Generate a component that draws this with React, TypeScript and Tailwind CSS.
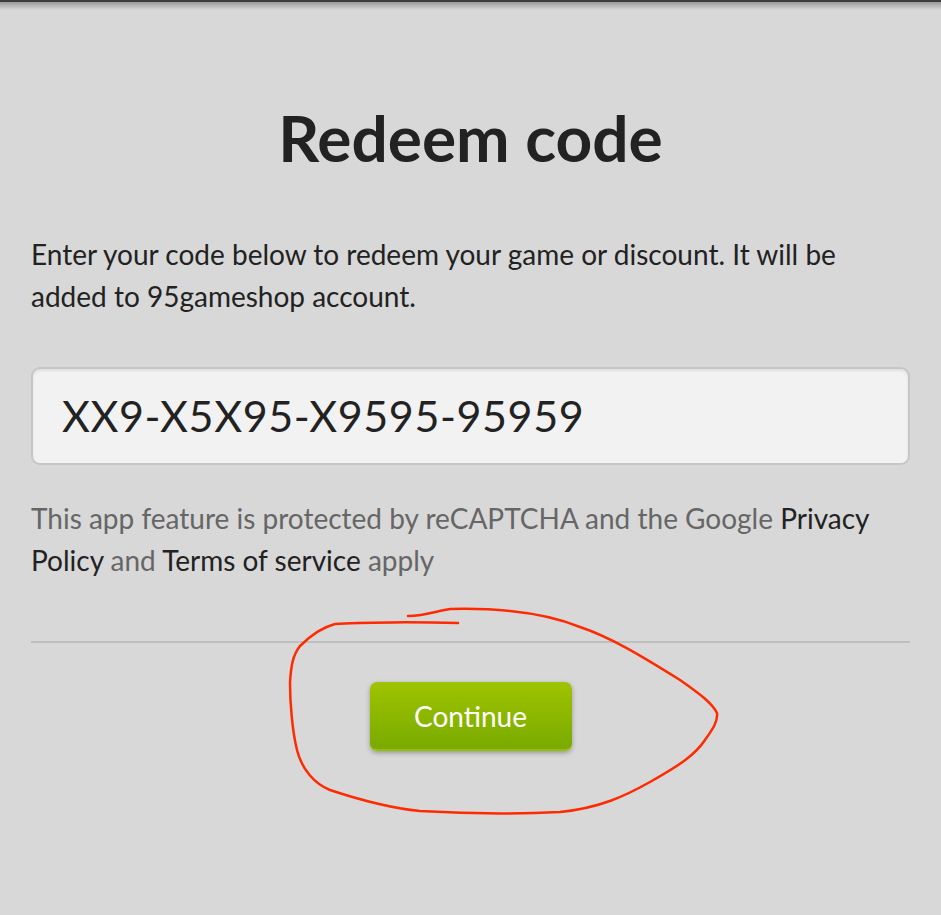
import React from 'react';

// hand-drawn red marker loop around the button
function MarkerLoop() {
  return (
    <svg
      className="pointer-events-none absolute left-0 top-0"
      width="941"
      height="915"
      viewBox="0 0 941 915"
      fill="none"
    >
      <path
        d="M408 616 C425 616 437 611 450 609 C490 608 540 611 580 627 C610 637 640 655 680 680 C700 694 712 703 717 713 C718 722 712 730 705 740 C695 755 680 765 650 782 C625 796 600 808 560 812 C520 814 470 814 420 811 C390 808 360 800 330 790 C315 784 302 770 297 750 C292 730 290 700 290 683 C291 665 293 655 300 646 C310 636 320 628 335 624 C360 622 420 622 458 623"
        stroke="#ff2a00"
        strokeWidth="2.5"
        strokeLinecap="round"
        strokeLinejoin="round"
      />
    </svg>
  );
}

export default function App() {
  return (
    <div
      className="relative min-h-[915px] w-[941px] overflow-hidden bg-[#d8d8d8] text-[#222]"
      style={{ fontFamily: 'Lato, "Open Sans", sans-serif' }}
    >
      <div className="h-[2px] bg-[#3c3c3c]" />
      <div className="h-[8px] bg-gradient-to-b from-[#9a9a9a] to-[#d8d8d8]" />

      <div className="px-[31px]">
        <h1 className="mt-[88px] text-center text-[64px] font-bold leading-[80px] text-[#222]">
          Redeem code
        </h1>

        <p className="mt-[55px] text-[28px] leading-[42px] text-[#222]">
          Enter your code below to redeem your game or discount. It will be added to 95gameshop account.
        </p>

        <div className="mt-[50px] flex h-[98px] items-center rounded-[9px] border-2 border-[#c6c6c6] bg-[#f2f2f2] px-[29px] shadow-[inset_0_2px_3px_rgba(0,0,0,0.08)]">
          <span className="text-[43px] tracking-[0.6px] text-[#222]">XX9-X5X95-X9595-95959</span>
        </div>

        <p className="mt-[32px] text-[28px] leading-[42px] text-[#666]">
          This app feature is protected by reCAPTCHA and the Google{' '}
          <span className="text-[#222]">Privacy Policy</span> and{' '}
          <span className="text-[#222]">Terms of service</span> apply
        </p>

        <div className="mt-[60px] h-[2px] bg-[#bfbfbf]" />

        <div className="mt-[39px] flex justify-center">
          <button className="flex h-[69px] w-[202px] items-center justify-center rounded-[7px] border-b-2 border-[#95c000] bg-gradient-to-b from-[#9fc400] to-[#79aa00] text-[28px] text-white shadow-[0_2px_5px_rgba(0,0,0,0.3)]">
            Continue
          </button>
        </div>
      </div>

      <MarkerLoop />
    </div>
  );
}
